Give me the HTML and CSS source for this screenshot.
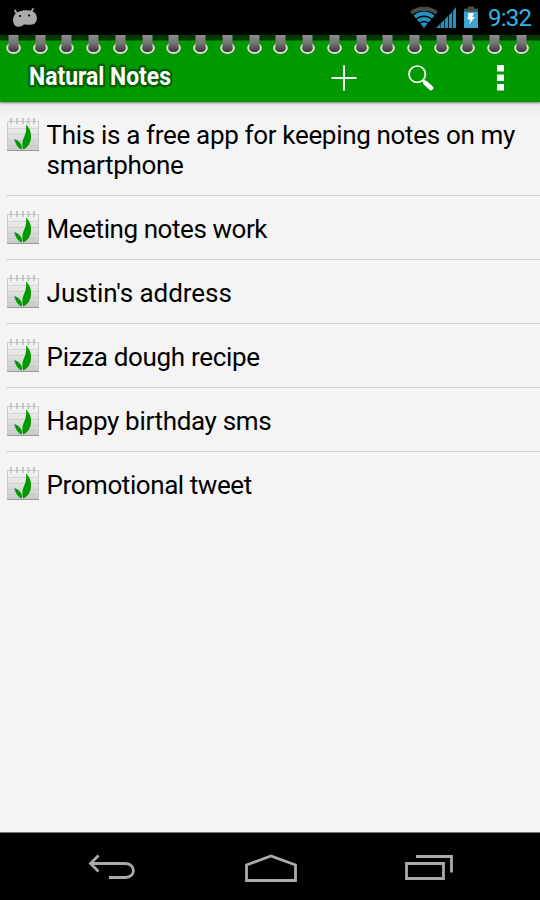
FILE: index.html
```
<!DOCTYPE html>
<html lang="en">
<head>
<meta charset="utf-8">
<title>Natural Notes</title>
<link rel="stylesheet" href="styles.css">
</head>
<body>
<svg class="defs" width="0" height="0" aria-hidden="true">
  <defs>
    <linearGradient id="paper" x1="0" y1="0" x2="0" y2="1"><stop offset="0" stop-color="#f6f6f6"/><stop offset="1" stop-color="#cacaca"/></linearGradient>
    <linearGradient id="metal" x1="0" y1="0" x2="0" y2="1"><stop offset="0" stop-color="#8c8c8c"/><stop offset=".45" stop-color="#777"/><stop offset="1" stop-color="#383838"/></linearGradient>
    <symbol id="note" viewBox="0 0 34 36">
      <path d="M1.5 5.500H32.500V34.500H1.500Z" fill="url(#paper)" stroke="#c8c8c8"/>
      <path d="M2 12.500H32M2 18.500H32M2 24.500H32M2 29.500H32" stroke="#c2c2c2" opacity=".5"/>
      <path d="M1 34.500H33" stroke="#999"/>
      <path d="M5 2V8M11 2V8M17 2V8M22.500 2V8M28 2V8" stroke="#c4c4c4" stroke-width="1.800"/>
      <path d="M17.300 33.500C15.500 29 16.500 24 18.500 20C20 17 20.500 12 20 8.500C24 12 25.500 17 25 22C24.500 27 22 31.500 17.300 33.500Z" fill="#090"/>
      <path d="M15.800 33.500C11 31.500 9.500 27.500 8.200 23C13.500 25 16.500 28 15.800 33.500Z" fill="#090"/>
    </symbol>
  </defs>
</svg>
<div class="screen">
  <header class="status">
    <svg class="robot" width="26" height="20" viewBox="0 0 26 20"><path d="M3 3.500L5 7M21 2L19 5" stroke="#aaa" stroke-width="1.800" stroke-linecap="round"/><path d="M3 18.500C-.5 15 1 7 6 5C10 3 17 2.500 21 4.500C26 7 26 14.500 22 17C19 18.500 15 17 12 17.500C9 20 5 20.500 3 18.500Z" fill="#aaa"/><circle cx="8" cy="9" r="1.100"/><circle cx="17" cy="8.500" r="1.100"/></svg>
    <svg class="signals" width="70" height="24" viewBox="0 0 70 24">
      <path d="M0 6.500C7 .2 21 .2 28 6.500L25.500 9.500C19 4.500 9 4.500 2.500 9.500Z" fill="#4c4c4c"/>
      <path d="M3.500 10.500C10 5 18 5 24.500 10.500L22 13.500C17 9.500 11 9.500 6 13.500Z" fill="#258fbd"/>
      <path d="M6.800 14.500C11 11 17 11 21.200 14.500L18.500 17.500C16 15.500 12 15.500 9.500 17.500Z" fill="#258fbd"/>
      <path d="M10.300 18.500C12.500 16.700 15.500 16.700 17.700 18.500L14 23Z" fill="#258fbd"/>
      <path d="M26 23L30 19V23ZM30.500 18.500L34 15V23H30.500ZM34.800 14.200L38 11V23H34.800ZM38.800 10.200L42 7V23H38.800ZM42.800 6.200L46 2V23H42.800Z" fill="#258fbd"/>
      <path d="M54 6.500V3.500H58V1.500H64V3.500H68V6.500Z" fill="#4c4c4c"/><path d="M54 6.500H68V23H54Z" fill="#3ba5d0"/>
      <path d="M58.500 8H64L62.500 12H65L59 19.500L60.500 14.500H57.500Z" fill="#fff"/>
    </svg>
    <span class="clock">9:32</span>
  </header>
  <div class="bar">
    <div class="rings"></div>
    <div class="actions">
      <svg class="title" width="160" height="46" viewBox="0 0 160 46"><text x="5" y="30" textLength="142" lengthAdjust="spacingAndGlyphs">Natural Notes</text></svg>
      <svg class="add" width="26" height="26" viewBox="0 0 26 26"><path d="M13 .5V25.500M.5 13H25.500" stroke="#fff" stroke-width="2"/></svg>
      <svg class="find" width="26" height="26" viewBox="0 0 26 26"><circle cx="9.200" cy="9.200" r="8.200" fill="none" stroke="#fff" stroke-width="1.700"/><path d="M14.500 15L17 17.500" stroke="#fff" stroke-width="2.500"/><path d="M17.500 18L23 23" stroke="#fff" stroke-width="4.600" stroke-linecap="round"/></svg>
      <svg class="more" width="7" height="26" viewBox="0 0 7 26"><path d="M0 0H7V6.500H0ZM0 9.500H7V16H0ZM0 19H7V25.500H0Z" fill="#fff"/></svg>
    </div>
  </div>
  <main class="list">
    <div class="row first"><svg class="icon"><use href="#note"/></svg><span class="label">This is a free app for keeping notes on my<br>smartphone</span></div>
    <div class="row"><svg class="icon"><use href="#note"/></svg><span class="label tight">Meeting notes work</span></div>
    <div class="row"><svg class="icon"><use href="#note"/></svg><span class="label loose">Justin's address</span></div>
    <div class="row"><svg class="icon"><use href="#note"/></svg><span class="label">Pizza dough recipe</span></div>
    <div class="row"><svg class="icon"><use href="#note"/></svg><span class="label">Happy birthday sms</span></div>
    <div class="row"><svg class="icon"><use href="#note"/></svg><span class="label tight">Promotional tweet</span></div>
  </main>
  <nav class="nav">
    <svg width="48" height="28" viewBox="0 0 48 28"><path d="M2 10.500H37.500C48 10.500 48 24.500 37.500 24.500H21M10.500 2.500L2.500 10.500L10.500 18.500" fill="none" stroke="#aaa" stroke-width="2.800"/></svg>
    <svg width="52" height="30" viewBox="0 0 52 30"><path d="M1.500 27.500V12L26 3L50.500 12V27.500Z" fill="none" stroke="#aaa" stroke-width="2.800"/></svg>
    <svg width="48" height="28" viewBox="0 0 48 28"><path d="M1.500 10.500H38.500V25.500H1.500ZM11 3.500H46.500V19.500" fill="none" stroke="#aaa" stroke-width="2.800"/></svg>
  </nav>
</div>
<script src="rings.js"></script>
</body>
</html>
```
FILE: styles.css
```
body { margin: 0; font-family: Roboto, "Liberation Sans", sans-serif; }
.defs { display: block; height: 0; }
.screen { width: 540px; height: 900px; display: flex; flex-direction: column; background: #f4f4f4; overflow: hidden; }
.status { height: 35px; flex: none; background: #000; display: flex; align-items: flex-start; box-sizing: border-box; padding: 0 8px 0 12px; }
.robot { margin-top: 7px; }
.signals { margin: 5px 0 0 auto; }
.clock { width: 44px; margin-left: 8px; font-size: 24px; line-height: 37px; color: #33b5e5; letter-spacing: -0.8px; white-space: nowrap; }
.bar { height: 67px; flex: none; background: linear-gradient(#003a00 0 4px, #003000 5px, #090 6px); box-shadow: 0 1px 2px #777; z-index: 1; }
.rings { height: 20px; display: flex; justify-content: space-between; padding: 0 10px 0 5px; }
.ring { display: block; }
.actions { height: 46px; display: flex; align-items: flex-start; padding-left: 24px; }
.title { overflow: visible; }
.title text { font: bold 26.5px "Liberation Sans Narrow", Roboto, sans-serif; fill: #fff; stroke: #006100; stroke-width: 5px; paint-order: stroke; stroke-linejoin: round; }
.add { margin: 10px 0 0 147px; }
.find { margin: 10px 0 0 51px; }
.more { margin: 10px 0 0 63px; }
.list { flex: 1; padding-left: 6px; background: linear-gradient(#e8e8e8, #f4f4f4 14px); }
.row { height: 64px; box-sizing: border-box; display: flex; align-items: flex-start; border-bottom: 1px solid #d2d2d2; padding-top: 13px; }
.row:last-child { border-bottom: 0; }
.row.first { height: 94px; }
.row.first .icon { margin-top: 1px; }
.icon { width: 34px; height: 36px; flex: none; }
.label { margin: 5px 0 0 6.6px; font-size: 26px; line-height: 30px; letter-spacing: -0.33px; color: #000; white-space: nowrap; }
.label.tight { letter-spacing: -0.43px; }
.label.loose { letter-spacing: -0.05px; }
.nav { height: 68px; flex: none; background: #000; border-top: 1px solid #777; box-sizing: border-box; display: flex; justify-content: space-between; align-items: flex-start; padding: 20px 87px 0 88px; }
```
FILE: rings.js
```
const rings = document.querySelector(".rings");
for (let i = 0; i < 20; i++) {
  rings.insertAdjacentHTML("beforeend", '<svg class="ring" width="17" height="20" viewBox="0 0 17 20"><ellipse cx="8.500" cy="13" rx="6.300" ry="4.900" fill="#555" stroke="#dcdcd4" stroke-width="2.200"/><path d="M3.500 0H13.500V11Q14.500 17 8.500 17Q2.500 17 3.500 11Z" fill="url(#metal)"/></svg>');
}
```
